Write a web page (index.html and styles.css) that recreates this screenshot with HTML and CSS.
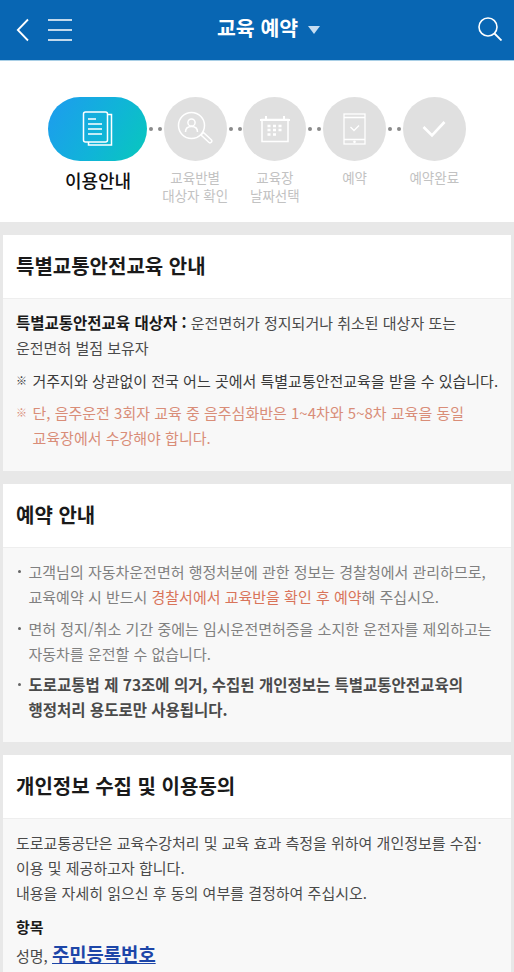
FILE: index.html
```html
<!DOCTYPE html>
<html lang="ko">
<head>
<meta charset="utf-8">
<title>교육 예약</title>
<link rel="stylesheet" href="styles.css">
</head>
<body>
<header class="topbar">
  <div class="top-left">
    <svg class="ic-back" width="13" height="24" viewBox="0 0 13 24"><path d="M12 1.500 1.800 12 12 22.500" fill="none" stroke="#fff" stroke-width="1.800"/></svg>
    <svg class="ic-menu" width="24" height="22" viewBox="0 0 24 22"><path d="M0 1h24M0 11h24M0 21h24" fill="none" stroke="#fff" stroke-width="1.600"/></svg>
  </div>
  <div class="top-title">교육 예약<span class="caret"></span></div>
  <svg class="ic-search" width="24" height="24" viewBox="0 0 24 24"><circle cx="10" cy="10" r="9" fill="none" stroke="#fff" stroke-width="1.600"/><path d="M16.500 16.500 23.500 23.500" fill="none" stroke="#fff" stroke-width="1.800"/></svg>
</header>

<section class="steps">
  <div class="step step-active">
    <div class="pill">
      <svg width="32" height="36" viewBox="0 0 32 36" fill="none" stroke="#fff" stroke-width="1.500"><path d="M26 3.500h3.500V34H6.500v-3"/><rect x="1.500" y="1" width="24" height="30" rx="2"/><path d="M6 8h8M6 13h14M6 18h14M6 23h14"/></svg>
    </div>
    <div class="step-label step-label-on">이용안내</div>
  </div>
  <div class="dots"><i></i><i></i></div>
  <div class="step">
    <div class="circle">
      <svg width="36" height="36" viewBox="0 0 36 36" fill="none" stroke="#fff" stroke-width="1.500"><circle cx="14.500" cy="14.500" r="13"/><circle cx="14.500" cy="11.500" r="3.600"/><path d="M8.500 21c0-4 2.500-5.500 6-5.500s6 1.500 6 5.500"/><path d="M24 24l2.500-2.500 8 7.500a1.800 1.800 0 0 1-2.500 2.500z"/></svg>
    </div>
    <div class="step-label">교육반별<br>대상자 확인</div>
  </div>
  <div class="dots"><i></i><i></i></div>
  <div class="step">
    <div class="circle">
      <svg width="32" height="28" viewBox="0 0 32 28" fill="none" stroke="#fff" stroke-width="1.500"><path d="M3 4.500h26V26.500H3z"/><path d="M1 5h30M7 1v4M25 1v4" stroke-width="2"/><path d="M8.500 11h3M14 11h3M19.500 11h3M8.500 15h3M14 15h3M19.500 15h3M8.500 19.500h3M14 19.500h3" stroke-width="2.400" /></svg>
    </div>
    <div class="step-label">교육장<br>날짜선택</div>
  </div>
  <div class="dots"><i></i><i></i></div>
  <div class="step">
    <div class="circle">
      <svg width="23" height="32" viewBox="0 0 23 32" fill="none" stroke="#fff" stroke-width="1.300"><rect x="1" y="1" width="21" height="30"/><path d="M1 4.500h21M1 26.500h21"/><path d="M7.500 14l3.500 3.500 5-5"/><circle cx="11.500" cy="28.800" r=".7" fill="#fff"/></svg>
    </div>
    <div class="step-label">예약</div>
  </div>
  <div class="dots"><i></i><i></i></div>
  <div class="step">
    <div class="circle">
      <svg width="24" height="18" viewBox="0 0 24 18" fill="none" stroke="#fff" stroke-width="2.600"><path d="M1.500 7 10 15.500 22.500 2"/></svg>
    </div>
    <div class="step-label">예약완료</div>
  </div>
</section>

<main class="content">
  <section class="card">
    <h2 class="card-title">특별교통안전교육 안내</h2>
    <div class="card-body body-a">
      <p class="para"><strong class="dark">특별교통안전교육 대상자 :</strong> 운전면허가 정지되거나 취소된 대상자 또는<br>운전면허 벌점 보유자</p>
      <p class="note note-dark"><span class="mark">※</span>거주지와 상관없이 전국 어느 곳에서 특별교통안전교육을 받을 수 있습니다.</p>
      <p class="note note-red"><span class="mark">※</span>단, 음주운전 3회자 교육 중 음주심화반은 1~4차와 5~8차 교육을 동일<br>교육장에서 수강해야 합니다.</p>
    </div>
  </section>

  <section class="card">
    <h2 class="card-title">예약 안내</h2>
    <div class="card-body body-b">
      <p class="bullet">고객님의 자동차운전면허 행정처분에 관한 정보는 경찰청에서 관리하므로,<br>교육예약 시 반드시 <span class="red">경찰서에서 교육반을 확인 후 예약</span>해 주십시오.</p>
      <p class="bullet">면허 정지/취소 기간 중에는 임시운전면허증을 소지한 운전자를 제외하고는<br>자동차를 운전할 수 없습니다.</p>
      <p class="bullet bullet-bold">도로교통법 제 73조에 의거, 수집된 개인정보는 특별교통안전교육의<br>행정처리 용도로만 사용됩니다.</p>
    </div>
  </section>

  <section class="card">
    <h2 class="card-title">개인정보 수집 및 이용동의</h2>
    <div class="card-body body-c">
      <p class="para">도로교통공단은 교육수강처리 및 교육 효과 측정을 위하여 개인정보를 수집·<br>이용 및 제공하고자 합니다.<br>내용을 자세히 읽으신 후 동의 여부를 결정하여 주십시오.</p>
      <p class="item-head">항목</p>
      <p class="item-text">성명, <a class="id-link" href="#">주민등록번호</a></p>
    </div>
  </section>
</main>
</body>
</html>
```

FILE: styles.css
```css
* { box-sizing: border-box; }
html, body { margin: 0; padding: 0; }
body {
  width: 514px;
  height: 972px;
  overflow: hidden;
  background: #e8e8e8;
  font-family: "Noto Sans CJK KR", "Noto Sans", sans-serif;
  color: #444;
}
p, h2 { margin: 0; }

.topbar {
  height: 61px;
  background: #0866b3;
  border-bottom: 1px solid #a9cfe6;
  display: flex;
  align-items: center;
  padding: 0 12px 1px 16px;
  position: relative;
}
.top-left { display: flex; align-items: center; gap: 19px; flex: 1; }
.top-title {
  position: absolute;
  left: 217px;
  top: 11px;
  color: #fff;
  font-size: 20.500px;
  line-height: 32px;
  font-weight: 700;
  white-space: nowrap;
}
.caret {
  display: inline-block;
  margin-left: 10px;
  vertical-align: 2px;
  border-left: 6px solid transparent;
  border-right: 6px solid transparent;
  border-top: 8px solid #c5ddf2;
}
.ic-search { margin-top: -2px; }

.steps {
  height: 161px;
  background: #fff;
  padding: 36px 0 0 48px;
  display: flex;
  align-items: flex-start;
}
.step { display: flex; flex-direction: column; align-items: center; width: 63px; }
.step-active { width: 99px; }
.pill {
  width: 99px;
  height: 64px;
  border-radius: 32px;
  background: linear-gradient(120deg, #1e9bef 0%, #10b4d8 55%, #08c8bc 100%);
  display: flex;
  align-items: center;
  justify-content: center;
}
.circle {
  width: 63px;
  height: 64px;
  border-radius: 50%;
  background: #e0e0e0;
  display: flex;
  align-items: center;
  justify-content: center;
}
.dots {
  width: 16.700px;
  height: 64px;
  display: flex;
  align-items: center;
  justify-content: center;
  gap: 5px;
}
.dots i { width: 4px; height: 4px; border-radius: 50%; background: #8a8a8a; }
.step-label {
  margin-top: 7px;
  white-space: nowrap;
  text-align: center;
  color: #c2c2c2;
  font-size: 13.500px;
  line-height: 18px;
}
.step-label-on {
  margin-top: 6px;
  padding-left: 1px;
  color: #111;
  font-size: 18px;
  line-height: 26px;
  font-weight: 500;
}

.content { padding: 13px 3px 0; display: flex; flex-direction: column; gap: 13px; }
.card { background: #fff; }
.card-title {
  height: 63px;
  padding: 0 13px;
  font-size: 20px;
  line-height: 61px;
  font-weight: 700;
  color: #1a1a1a;
}
.card-body {
  background: #f8f8f8;
  border-top: 1px solid #eeeeee;
  padding: 11px 13px 0;
  font-size: 15px;
  line-height: 25px;
}
.body-a { height: 173px; }
.body-b { height: 195px; padding-top: 11px; }
.body-c { height: 170px; padding-top: 11px; }
.para { color: #4a4a4a; }
.dark { color: #1a1a1a; font-weight: 700; font-size: 15.500px; }
.note { position: relative; padding-left: 16.500px; margin-top: 8px; white-space: nowrap; }
.note-dark { color: #3a3a3a; }
.note-red { color: #d98d78; margin-top: 7px; }
.mark { position: absolute; left: 0; top: 0; font-size: 11px; }
.bullet { position: relative; padding-left: 12.500px; color: #808080; margin-bottom: 6.500px; white-space: nowrap; }
.bullet::before {
  content: "";
  position: absolute;
  left: 1.500px;
  top: 11px;
  width: 3px;
  height: 3px;
  border-radius: 50%;
  background: #666;
}
.red { color: #d9745a; }
.bullet-bold { color: #4a4a4a; font-weight: 700; font-size: 15.500px; }
.item-head { margin-top: 9px; color: #1a1a1a; font-weight: 700; }
.item-text { color: #4a4a4a; margin-top: 2px; }
.id-link { color: #1d46a8; font-size: 18.800px; font-weight: 700; text-decoration: underline; }
```
